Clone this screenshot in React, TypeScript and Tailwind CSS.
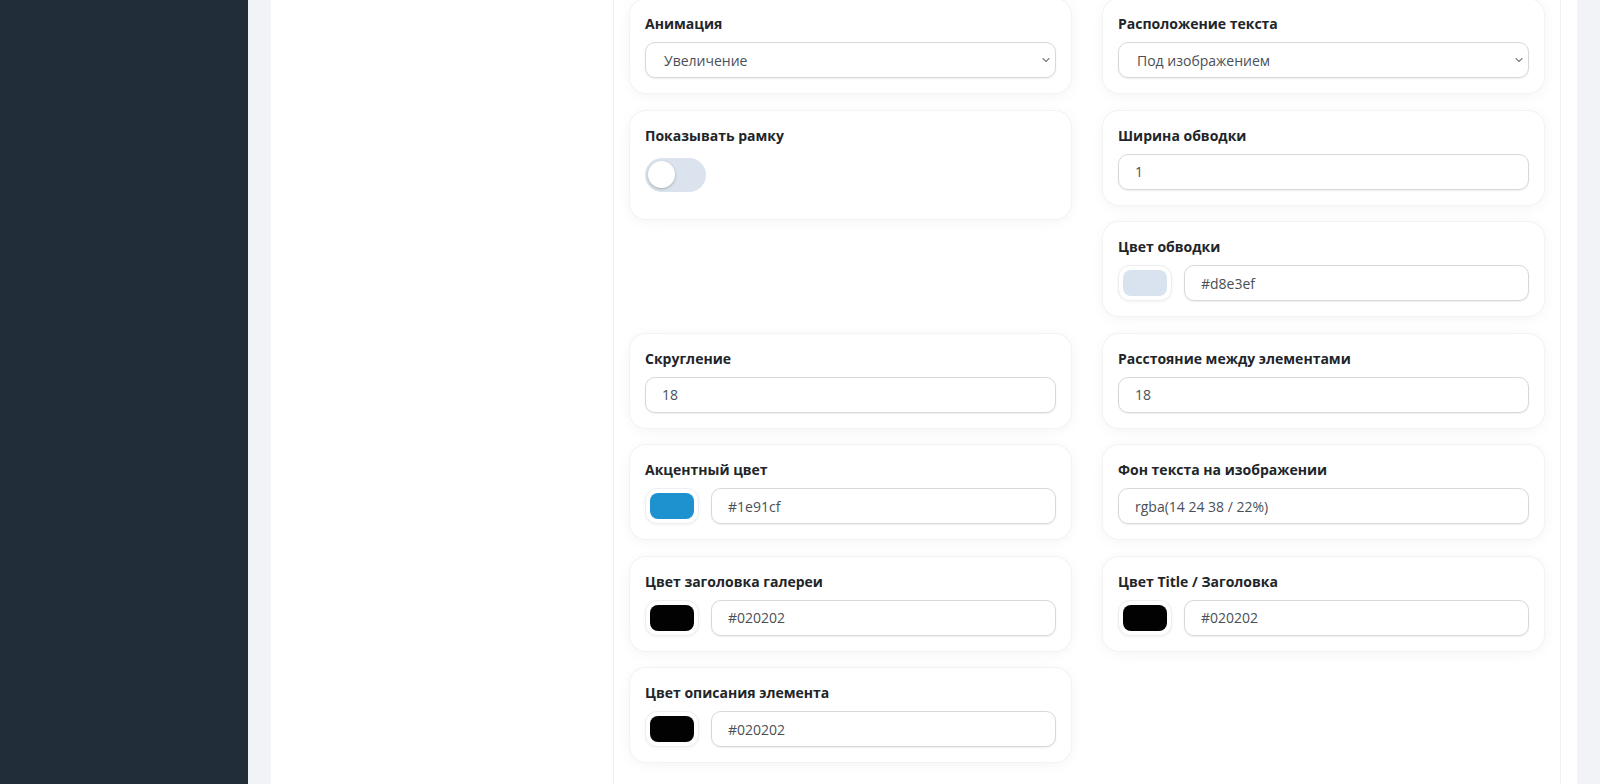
import type { ReactNode } from "react";

function Card({ label, children, className = "" }: { label: string; children: ReactNode; className?: string }) {
  return (
    <div
      className={`rounded-2xl bg-white p-[15px] shadow-[0_2px_14px_rgba(15,23,42,0.05)] ring-1 ring-[#f2f3f5] ${className}`}
    >
      <div className="mb-2 text-sm font-bold leading-5 text-[#212529]">{label}</div>
      {children}
    </div>
  );
}

function TextField({ value }: { value: string }) {
  return (
    <input
      readOnly
      value={value}
      className="h-9 w-full rounded-[10px] border border-[#d5d9de] bg-white px-4 text-sm text-[#495057] shadow-[0_1px_2px_rgba(0,0,0,0.07)] outline-none"
    />
  );
}

function SelectField({ value }: { value: string }) {
  return (
    <div className="relative flex h-9 w-full items-center rounded-[10px] border border-[#d5d9de] bg-white pl-[18px] pr-8 pt-px text-sm text-[#495057] shadow-[0_1px_2px_rgba(0,0,0,0.07)]">
      {value}
      <svg
        className="absolute right-[5px] top-1/2 -translate-y-1/2"
        width="8"
        height="6"
        viewBox="0 0 8 6"
        fill="none"
      >
        <path d="M1 1.5l3 3 3-3" stroke="#7b8088" strokeWidth="1.1" strokeLinecap="round" strokeLinejoin="round" />
      </svg>
    </div>
  );
}

function ColorField({ color, value }: { color: string; value: string }) {
  return (
    <div className="flex gap-3">
      <div className="h-9 w-[54px] shrink-0 rounded-xl border border-[#eceef1] bg-white p-1 shadow-[0_1px_3px_rgba(0,0,0,0.06)]">
        <div className="h-full w-full rounded-lg" style={{ backgroundColor: color }} />
      </div>
      <TextField value={value} />
    </div>
  );
}

function Toggle() {
  return (
    <div className="mb-3 mt-3 flex h-[34px] w-[61px] items-center rounded-full bg-[#dbe4ee] pl-[3px]">
      <div className="h-[27px] w-[27px] rounded-full bg-white shadow-[0_1px_3px_rgba(0,0,0,0.25)]" />
    </div>
  );
}

export default function App() {
  return (
    <div className="flex h-[784px] w-[1600px] overflow-hidden bg-[#f1f3f7] font-['Open_Sans',sans-serif]">
      {/* Sidebar */}
      <aside className="w-[248px] shrink-0 bg-[#222d3a]" />

      <main className="flex-1 px-[23px]">
        <div className="flex h-full bg-white pr-4">
          <div className="w-[342px] shrink-0" />

          {/* Settings grid */}
          <section className="flex-1 border-x border-[#eef0f3] px-4">
            <div className="-mt-px grid grid-cols-2 items-start gap-x-8 gap-y-[17.5px]">
              <Card label="Анимация">
                <SelectField value="Увеличение" />
              </Card>
              <Card label="Расположение текста">
                <SelectField value="Под изображением" />
              </Card>

              <Card label="Показывать рамку">
                <Toggle />
              </Card>
              <div className="flex flex-col gap-[17.5px]">
                <Card label="Ширина обводки">
                  <TextField value="1" />
                </Card>
                <Card label="Цвет обводки">
                  <ColorField color="#d8e3ef" value="#d8e3ef" />
                </Card>
              </div>

              <Card label="Скругление">
                <TextField value="18" />
              </Card>
              <Card label="Расстояние между элементами">
                <TextField value="18" />
              </Card>

              <Card label="Акцентный цвет">
                <ColorField color="#1e91cf" value="#1e91cf" />
              </Card>
              <Card label="Фон текста на изображении">
                <TextField value="rgba(14 24 38 / 22%)" />
              </Card>

              <Card label="Цвет заголовка галереи">
                <ColorField color="#020202" value="#020202" />
              </Card>
              <Card label="Цвет Title / Заголовка">
                <ColorField color="#020202" value="#020202" />
              </Card>

              <Card label="Цвет описания элемента">
                <ColorField color="#020202" value="#020202" />
              </Card>
            </div>
          </section>
        </div>
      </main>
    </div>
  );
}
